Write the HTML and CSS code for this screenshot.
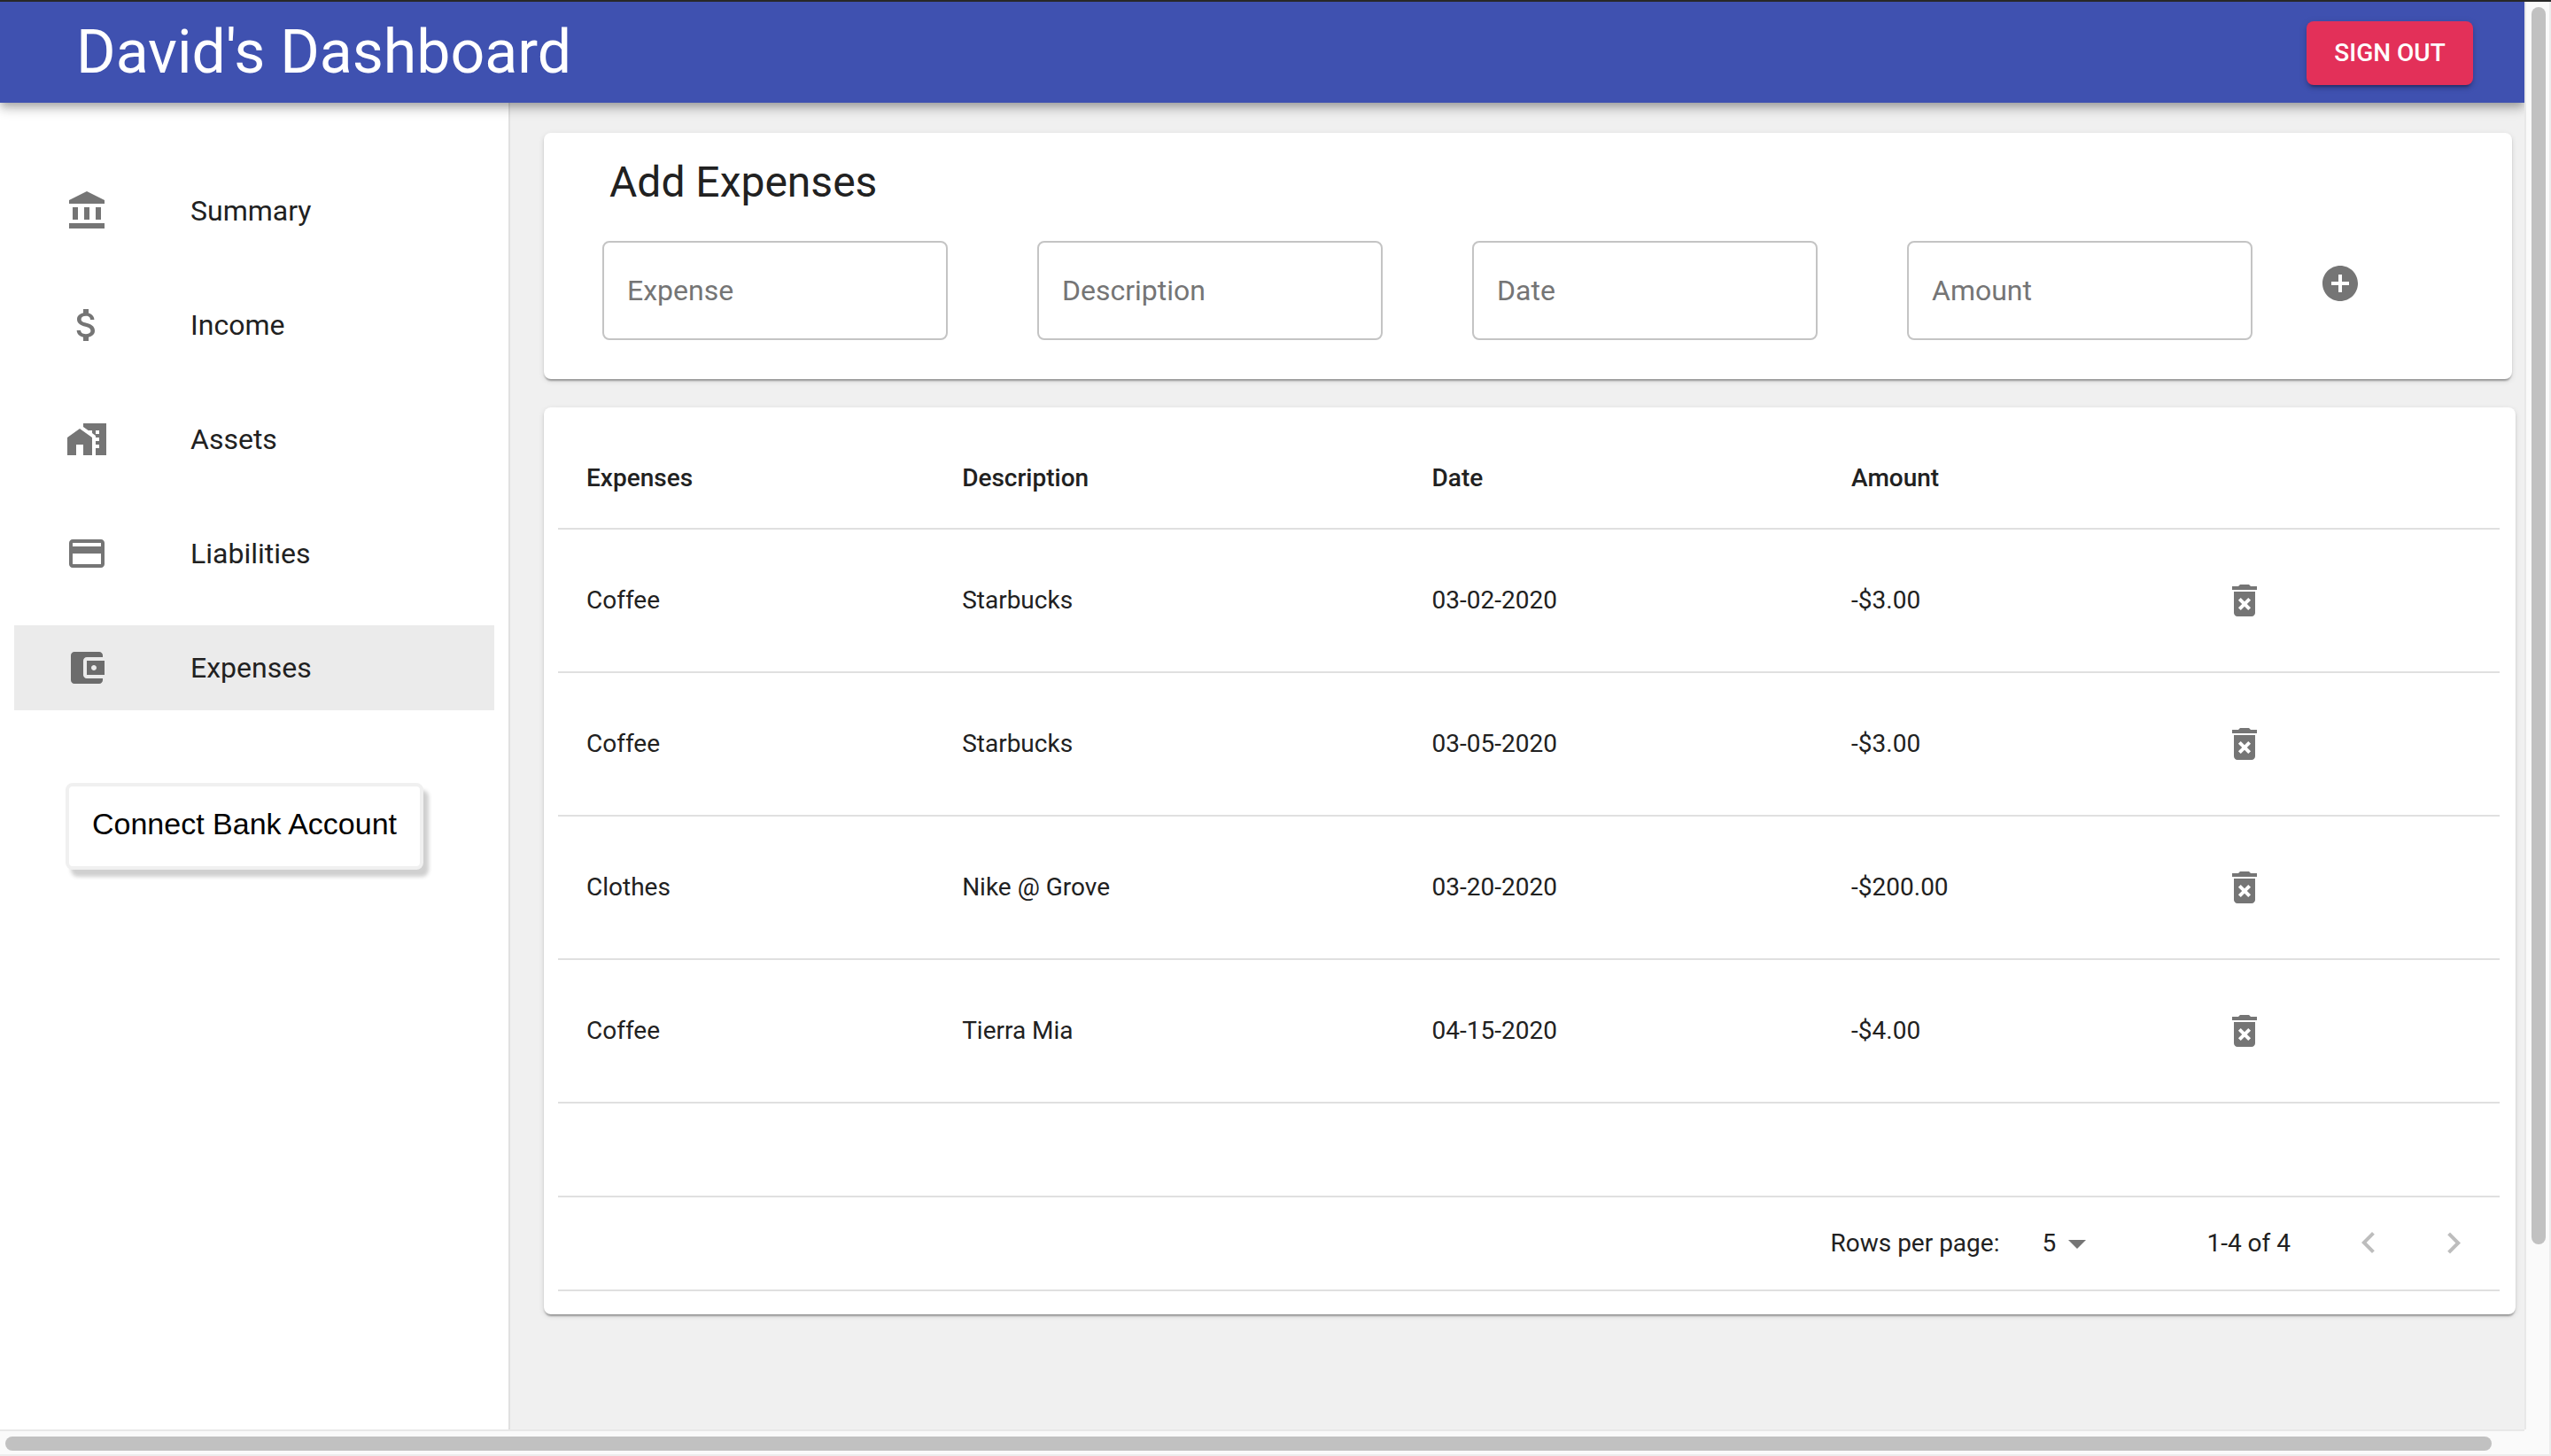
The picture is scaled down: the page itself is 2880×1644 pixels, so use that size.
FILE: index.html
```html
<!DOCTYPE html>
<html lang="en">
<head>
<meta charset="utf-8">
<title>David's Dashboard</title>
<link rel="stylesheet" href="styles.css">
</head>
<body>
<div class="window">
  <div class="app">
    <header class="topbar">
      <h1 class="topbar-title">David's Dashboard</h1>
      <button class="sign-out" type="button">SIGN OUT</button>
    </header>
    <div class="layout">
      <aside class="sidebar">
        <nav class="menu">
          <a class="menu-item" href="#summary">
            <svg class="icon" viewBox="0 0 24 24"><path d="M4 10h3v7H4zM10.5 10h3v7h-3zM2 19h20v3H2zM17 10h3v7h-3zM12 1L2 6v2h20V6z"/></svg>
            Summary
          </a>
          <a class="menu-item" href="#income">
            <svg class="icon" viewBox="0 0 24 24"><path d="M11.8 10.9c-2.27-.59-3-1.2-3-2.15 0-1.09 1.01-1.85 2.7-1.85 1.78 0 2.44.85 2.5 2.1h2.21c-.07-1.72-1.12-3.3-3.21-3.81V3h-3v2.16c-1.94.42-3.5 1.68-3.5 3.61 0 2.31 1.91 3.46 4.7 4.13 2.5.6 3 1.48 3 2.41 0 .69-.49 1.79-2.7 1.79-2.06 0-2.87-.92-2.98-2.1h-2.2c.12 2.19 1.76 3.42 3.68 3.83V21h3v-2.15c1.95-.37 3.5-1.5 3.5-3.55 0-2.84-2.43-3.81-4.7-4.4z"/></svg>
            Income
          </a>
          <a class="menu-item" href="#assets">
            <svg class="icon" viewBox="0 0 24 24"><path d="M1 11v10h5v-6h4v6h5V11L8 6z"/><path d="M10 3v1.97L13 7.12V7h2v1.55l2 1.43V11h2v2h-2v2h2v2h-2v4h6V3H10zm9 6h-2V7h2v2z"/></svg>
            Assets
          </a>
          <a class="menu-item" href="#liabilities">
            <svg class="icon" viewBox="0 0 24 24"><path d="M20 4H4c-1.11 0-1.99.89-1.99 2L2 18c0 1.11.89 2 2 2h16c1.11 0 2-.89 2-2V6c0-1.11-.89-2-2-2zm0 14H4v-6h16v6zm0-10H4V6h16v2z"/></svg>
            Liabilities
          </a>
          <a class="menu-item is-active" href="#expenses" aria-current="page">
            <svg class="icon" viewBox="0 0 24 24"><path d="M21 18v1c0 1.1-.9 2-2 2H5c-1.11 0-2-.9-2-2V5c0-1.1.89-2 2-2h14c1.1 0 2 .9 2 2v1h-9c-1.11 0-2 .9-2 2v8c0 1.1.89 2 2 2h9zm-9-2h10V8H12v8zm4-2.5c-.83 0-1.5-.67-1.5-1.5s.67-1.5 1.5-1.5 1.5.67 1.5 1.5-.67 1.5-1.5 1.5z"/></svg>
            Expenses
          </a>
        </nav>
        <button class="connect" type="button">Connect Bank Account</button>
      </aside>
      <main class="content">
        <section class="card add-card">
          <h2 class="card-title">Add Expenses</h2>
          <form class="add-form">
            <div class="cell"><input class="field" type="text" placeholder="Expense" aria-label="Expense"></div>
            <div class="cell"><input class="field" type="text" placeholder="Description" aria-label="Description"></div>
            <div class="cell"><input class="field" type="text" placeholder="Date" aria-label="Date"></div>
            <div class="cell"><input class="field" type="text" placeholder="Amount" aria-label="Amount"></div>
            <button class="icon-button" type="button" aria-label="Add expense">
              <svg class="icon" viewBox="0 0 24 24"><path d="M12 2C6.48 2 2 6.48 2 12s4.48 10 10 10 10-4.48 10-10S17.52 2 12 2zm5 11h-4v4h-2v-4H7v-2h4V7h2v4h4v2z"/></svg>
            </button>
          </form>
        </section>
        <section class="card table-card">
          <table class="expenses">
            <colgroup>
              <col class="col-expense"><col class="col-description"><col class="col-date"><col class="col-amount"><col>
            </colgroup>
            <thead>
              <tr><th scope="col">Expenses</th><th scope="col">Description</th><th scope="col">Date</th><th scope="col">Amount</th><td></td></tr>
            </thead>
            <tbody>
              <tr><td>Coffee</td><td>Starbucks</td><td>03-02-2020</td><td>-$3.00</td><td><button class="icon-button" type="button" aria-label="Delete"><svg class="icon" viewBox="0 0 24 24"><use href="#trash"/></svg></button></td></tr>
              <tr><td>Coffee</td><td>Starbucks</td><td>03-05-2020</td><td>-$3.00</td><td><button class="icon-button" type="button" aria-label="Delete"><svg class="icon" viewBox="0 0 24 24"><use href="#trash"/></svg></button></td></tr>
              <tr><td>Clothes</td><td>Nike @ Grove</td><td>03-20-2020</td><td>-$200.00</td><td><button class="icon-button" type="button" aria-label="Delete"><svg class="icon" viewBox="0 0 24 24"><use href="#trash"/></svg></button></td></tr>
              <tr><td>Coffee</td><td>Tierra Mia</td><td>04-15-2020</td><td>-$4.00</td><td><button class="icon-button" type="button" aria-label="Delete"><svg class="icon" viewBox="0 0 24 24"><use href="#trash"/></svg></button></td></tr>
              <tr class="row-empty"><td colspan="5"></td></tr>
            </tbody>
            <tfoot>
              <tr>
                <td class="pager-cell" colspan="5">
                  <div class="pager">
                    <label for="rows">Rows per page:</label>
                    <div class="select-wrap">
                      <select class="select" id="rows"><option>5</option><option>10</option><option>25</option></select>
                      <svg class="icon select-arrow" viewBox="0 0 24 24"><path d="M7 10l5 5 5-5z"/></svg>
                    </div>
                    <span class="range">1-4 of 4</span>
                    <button class="icon-button" type="button" disabled aria-label="Previous page"><svg class="icon" viewBox="0 0 24 24"><path d="M15.41 16.09l-4.58-4.59 4.58-4.59L14 5.5l-6 6 6 6z"/></svg></button>
                    <button class="icon-button" type="button" disabled aria-label="Next page"><svg class="icon" viewBox="0 0 24 24"><path d="M8.59 16.34l4.58-4.59-4.58-4.59L10 5.75l6 6-6 6z"/></svg></button>
                  </div>
                </td>
              </tr>
            </tfoot>
          </table>
        </section>
      </main>
    </div>
  </div>
  <div class="track track-y"><div class="thumb"></div></div>
  <div class="track track-x"><div class="thumb"></div></div>
  <div class="track-corner"></div>
</div>
<svg class="sprite" width="0" height="0">
  <symbol id="trash" viewBox="0 0 24 24"><path d="M6 19c0 1.1.9 2 2 2h8c1.1 0 2-.9 2-2V7H6v12zm2.46-7.12l1.41-1.41L12 12.59l2.12-2.12 1.41 1.41L13.41 14l2.12 2.12-1.41 1.41L12 15.41l-2.12 2.12-1.41-1.41L10.59 14l-2.13-2.12zM15.5 4l-1-1h-5l-1 1H5v2h14V4z"/></symbol>
</svg>
</body>
</html>
```
FILE: styles.css
```css
* {
  box-sizing: border-box;
}

body {
  margin: 0;
  background: #f0f0f0;
  color: #212121;
  font-family: Roboto, sans-serif;
  font-size: 28px;
  line-height: 48px;
}

button,
input,
select {
  font: inherit;
}

.sprite {
  display: none;
}

.window {
  display: grid;
  grid-template-columns: minmax(0, 1fr) 30px;
  grid-template-rows: 1fr 30px;
  min-height: 100vh;
  border-top: 2px solid #282828;
}

.app {
  display: flex;
  flex-direction: column;
  overflow: hidden;
}

/* Top bar */
.topbar {
  position: relative;
  z-index: 1;
  display: flex;
  align-items: center;
  justify-content: space-between;
  padding: 19px 58px 19px 86px;
  background: #3f51b0;
  color: #fff;
  box-shadow: 0 4px 8px -2px rgba(0, 0, 0, 0.2), 0 8px 10px 0 rgba(0, 0, 0, 0.14), 0 2px 20px 0 rgba(0, 0, 0, 0.12);
}

.topbar-title {
  margin: 0;
  font-size: 68px;
  font-weight: 400;
  line-height: 76px;
}

.sign-out {
  min-width: 188px;
  margin-top: 2px;
  padding: 12px 30px;
  border: 0;
  border-radius: 8px;
  background: #e33059;
  color: #fff;
  font-weight: 500;
  box-shadow: 0 6px 2px -4px rgba(0, 0, 0, 0.2), 0 4px 4px 0 rgba(0, 0, 0, 0.14), 0 2px 10px 0 rgba(0, 0, 0, 0.12);
}

.layout {
  flex: 1;
  display: flex;
}

/* Sidebar */
.sidebar {
  flex: none;
  width: 576px;
  padding: 74px 16px 32px;
  border-right: 2px solid #e0e0e0;
  background: #fff;
}

.menu {
  display: flex;
  flex-direction: column;
  gap: 33px;
}

.menu-item {
  display: flex;
  align-items: center;
  gap: 93px;
  padding: 24px 58px;
  color: inherit;
  font-size: 32px;
  text-decoration: none;
}

.menu-item.is-active {
  background: #ebebeb;
}

.icon {
  flex: none;
  display: block;
  width: 48px;
  height: 48px;
  fill: #757575;
}

.is-active .icon {
  fill: #6c6c6c;
}

.connect {
  margin: 82px 58px 0;
  padding: 18px 26px 24px;
  border: 4px solid #f0f0f0;
  border-radius: 8px;
  background: #fff;
  color: #000;
  font-family: "Liberation Sans", Arial, sans-serif;
  font-size: 34px;
  white-space: nowrap;
  box-shadow: 6px 8px 4px #d0d0d0;
}

/* Main column */
.content {
  flex: 1;
  min-width: 0;
  display: flex;
  flex-direction: column;
  gap: 32px;
  padding: 34px 10px 32px 38px;
}

.card {
  border-radius: 8px;
  background: #fff;
  box-shadow: 0 4px 2px -2px rgba(0, 0, 0, 0.2), 0 2px 2px 0 rgba(0, 0, 0, 0.14), 0 2px 6px 0 rgba(0, 0, 0, 0.12);
}

.add-card {
  margin-right: 4px;
  padding: 24px 0 44px 16px;
}

.card-title {
  margin: 0 0 34px;
  padding-left: 58px;
  font-size: 48px;
  font-weight: 400;
  line-height: 64px;
}

.add-form {
  display: grid;
  grid-template-columns: repeat(4, 491fr) 242fr;
}

.cell {
  padding: 0 51px 0 50px;
}

.field {
  width: 100%;
  height: 112px;
  padding: 0 26px;
  border: 2px solid #c4c4c4;
  border-radius: 8px;
  background: #fff;
  color: inherit;
  font-size: 32px;
}

.field::placeholder {
  color: #757575;
  opacity: 1;
}

.icon-button {
  display: block;
  width: 96px;
  height: 96px;
  padding: 24px;
  border: 0;
  border-radius: 50%;
  background: none;
}

.icon-button:disabled .icon {
  fill: #bdbdbd;
}

/* Table */
.table-card {
  padding: 24px 18px 26px 16px;
}

.expenses {
  width: 100%;
  border-collapse: separate;
  border-spacing: 0;
  table-layout: fixed;
}

.col-expense {
  width: 19.35%;
}

.col-description {
  width: 24.2%;
}

.col-date {
  width: 21.6%;
}

.col-amount {
  width: 18.05%;
}

.expenses th,
.expenses td {
  padding: 32px;
  border-bottom: 2px solid #e0e0e0;
  text-align: left;
  vertical-align: middle;
}

.expenses th {
  font-weight: 500;
}

.expenses tbody tr {
  height: 162px;
}

.expenses .row-empty,
.expenses tfoot tr {
  height: 106px;
}

.expenses .pager-cell {
  padding: 0 4px 0 0;
}

.pager {
  display: flex;
  align-items: center;
  justify-content: flex-end;
}

.select-wrap {
  position: relative;
  margin: 0 122px 0 32px;
}

.select {
  display: block;
  appearance: none;
  width: 80px;
  padding: 0 0 0 16px;
  border: 0;
  background: none;
  color: inherit;
}

.select-arrow {
  position: absolute;
  top: 0;
  right: 0;
  pointer-events: none;
}

.range {
  margin-right: 40px;
}

/* Window scrollbars */
.track {
  background: #fafafa;
}

.track-y {
  padding: 6px 4px 0 6px;
  border-left: 2px solid #e8e8e8;
  border-right: 2px solid #ececec;
}

.track-x {
  padding: 6px 0 4px 6px;
  border-top: 2px solid #e8e8e8;
  border-bottom: 2px solid #ececec;
}

.thumb {
  border-radius: 8px;
  background: #c1c1c1;
}

.track-y .thumb {
  width: 16px;
  height: 87%;
}

.track-x .thumb {
  width: 98.7%;
  height: 16px;
}

.track-corner {
  border-right: 2px solid #ececec;
  border-bottom: 2px solid #ececec;
  background: #fafafa;
}
```
